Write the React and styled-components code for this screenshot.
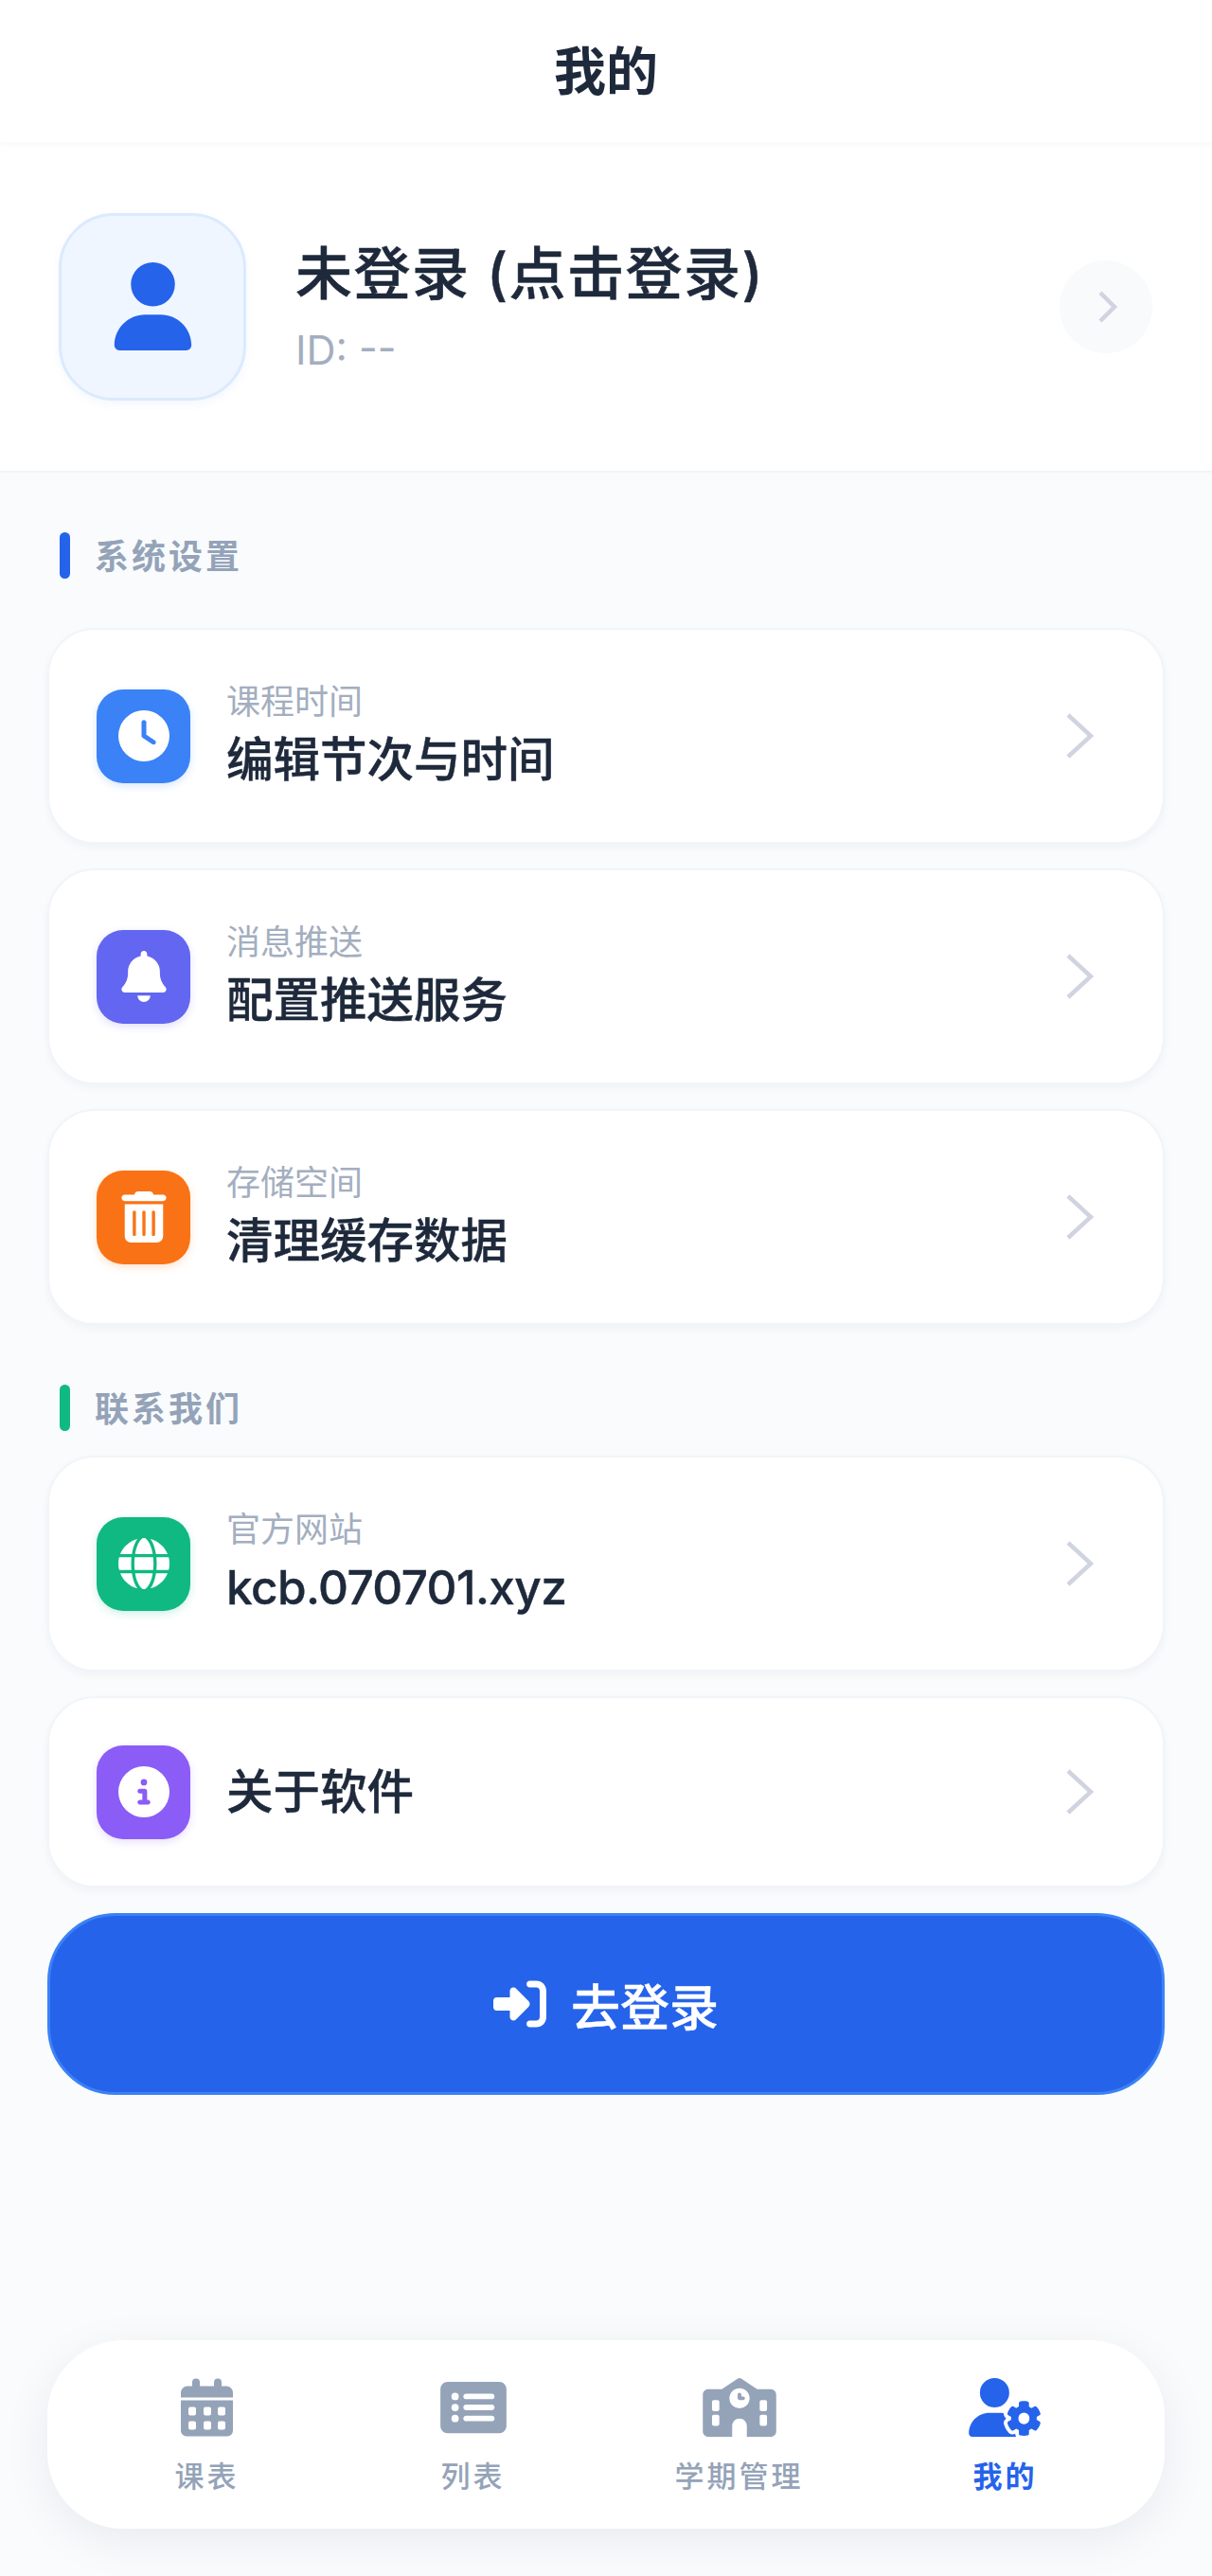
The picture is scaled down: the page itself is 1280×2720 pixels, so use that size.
import React from "react";
import styled, { createGlobalStyle } from "styled-components";
import {
    FaBell,
    FaCircleInfo,
    FaClock,
    FaGlobe,
    FaRectangleList,
    FaRightToBracket,
    FaSchool,
    FaTrashCan,
    FaUser,
    FaUserGear,
} from "react-icons/fa6";

const FONT = `Inter, "Noto Sans CJK SC", sans-serif`;

const GlobalStyle = createGlobalStyle`
    html, body {
        margin: 0;
        padding: 0;
        background: #f9fbfd;
    }

    * {
        box-sizing: border-box;
    }
`;

const Page = styled.div`
    display: flex;
    flex-direction: column;
    width: 1280px;
    height: 2720px;
    overflow: hidden;
    background: #f9fbfd;
    font-family: ${FONT};
    color: #1e293b;
`;

const Header = styled.header`
    display: flex;
    align-items: center;
    justify-content: center;
    height: 150px;
    padding-bottom: 8px;
    background: #ffffff;
    box-shadow: 0 2px 6px rgba(15, 23, 42, 0.03);
    font-size: 55px;
    font-weight: 600;
    position: relative;
`;

const Profile = styled.section`
    display: flex;
    align-items: center;
    height: 349px;
    padding: 0 63px 0 62px;
    background: #ffffff;
    border-bottom: 2px solid #f1f5f9;
`;

const Avatar = styled.div`
    display: flex;
    align-items: center;
    justify-content: center;
    flex: none;
    width: 198px;
    height: 198px;
    margin-right: 52px;
    border: 3px solid #dbeafe;
    border-radius: 58px;
    background: #eff6ff;
    color: #2563eb;
    font-size: 93px;
    box-shadow: 0 4px 10px rgba(37, 99, 235, 0.05);
`;

const ProfileText = styled.div`
    flex: 1;
    display: flex;
    flex-direction: column;
    gap: 18px;
`;

const ProfileName = styled.div`
    font-size: 60px;
    font-weight: 500;
    line-height: 72px;
    letter-spacing: 1.5px;
    -webkit-text-stroke: 0.5px #1e293b;
`;

const ProfileId = styled.div`
    font-size: 43px;
    line-height: 52px;
    color: #a3aebf;
`;

const RoundArrow = styled.div`
    display: flex;
    align-items: center;
    justify-content: center;
    width: 98px;
    height: 98px;
    padding-left: 3px;
    border-radius: 50%;
    background: #f8fafc;
`;

const Content = styled.main`
    display: flex;
    flex-direction: column;
    padding: 0 50px;
`;

const SectionTitle = styled.div`
    display: flex;
    align-items: center;
    gap: 26px;
    height: 49px;
    margin: ${(p) => p.$margin};
    padding-left: 13px;
    font-size: 36px;
    font-weight: 600;
    letter-spacing: 3px;
    color: #94a3b8;

    &::before {
        content: "";
        width: 11px;
        height: 49px;
        border-radius: 6px;
        background: ${(p) => p.$color};
    }
`;

const SectionText = styled.span`
    margin-top: -3px;
`;

const Cards = styled.div`
    display: flex;
    flex-direction: column;
    gap: 26px;
`;

const Card = styled.div`
    display: flex;
    align-items: center;
    height: ${(p) => (p.$short ? "202px" : "228px")};
    padding: 0 50px;
    border: 2px solid #f1f5f9;
    border-radius: 50px;
    background: #ffffff;
    box-shadow: 0 4px 10px rgba(15, 23, 42, 0.04);
`;

const IconTile = styled.div`
    display: flex;
    align-items: center;
    justify-content: center;
    flex: none;
    width: 99px;
    height: 99px;
    margin-right: 38px;
    border-radius: 28px;
    background: ${(p) => p.$color};
    color: #ffffff;
    font-size: 54px;
    box-shadow: 0 3px 8px ${(p) => p.$color}33;
`;

const CardText = styled.div`
    flex: 1;
    display: flex;
    flex-direction: column;
    gap: 4px;
    margin-top: ${(p) => (p.$single ? "0" : "-4px")};
`;

const CardLabel = styled.div`
    font-size: 36px;
    line-height: 50px;
    color: #a3aebf;
`;

const CardValue = styled.div`
    font-size: 49.5px;
    font-weight: 500;
    line-height: 64px;
    letter-spacing: ${(p) => (p.$latin ? "-0.6px" : "0")};
    color: #1e293b;
    -webkit-text-stroke: 0.4px #1e293b;
`;

const Chevron = styled.svg`
    flex: none;
    width: 30px;
    height: 50px;
    margin-right: 23px;
    fill: none;
    stroke: #cfd4e0;
    stroke-width: 4.5px;
`;

const LoginButton = styled.button`
    display: flex;
    align-items: center;
    justify-content: center;
    gap: 26px;
    width: 100%;
    height: 192px;
    margin-top: 27px;
    border: 3px solid #3b82f6;
    border-radius: 72px;
    background: #2563eb;
    color: #ffffff;
    font-family: ${FONT};
    font-size: 52px;
    font-weight: 500;
    -webkit-text-stroke: 0.4px #ffffff;

    svg {
        font-size: 56px;
    }
`;

const BottomNav = styled.nav`
    display: grid;
    grid-template-columns: repeat(4, 1fr);
    align-items: center;
    width: 1180px;
    height: 199px;
    margin: auto 50px 50px;
    padding: 0 28px;
    border-radius: 80px;
    background: #ffffff;
    box-shadow: 0 12px 50px rgba(15, 23, 42, 0.07);
`;

const NavItem = styled.div`
    display: flex;
    flex-direction: column;
    align-items: center;
    color: ${(p) => (p.$active ? "#2563eb" : "#94a3b8")};
`;

const NavIcon = styled.div`
    display: flex;
    align-items: center;
    justify-content: center;
    height: 62px;
    margin-top: 4px;

    svg {
        width: ${(p) => p.$width}px;
        height: 62px;
    }
`;

const NavLabel = styled.span`
    margin-top: 22px;
    font-size: 31px;
    font-weight: ${(p) => (p.$active ? 600 : 500)};
    line-height: 40px;
    letter-spacing: 3px;
`;

const Arrow = () => (
    <Chevron viewBox="0 0 30 50">
        <path d="M3 3 L27 25 L3 47" />
    </Chevron>
);

// calendar tab: two rings, a header band, and a body with 3x2 day cells cut out
const CalendarIcon = () => (
    <svg viewBox="0 0 55 61" fill="currentColor">
        <path d="M12 8V4a4 4 0 0 1 8 0v4h15V4a4 4 0 0 1 8 0v4h5a7 7 0 0 1 7 7v5H0v-5a7 7 0 0 1 7-7z" />
        <path
            fillRule="evenodd"
            d="M0 23h55v32a6 6 0 0 1-6 6H6a6 6 0 0 1-6-6z
               M10 30a2 2 0 0 0-2 2v5a2 2 0 0 0 2 2h4a2 2 0 0 0 2-2v-5a2 2 0 0 0-2-2z
               M26 30a2 2 0 0 0-2 2v5a2 2 0 0 0 2 2h4a2 2 0 0 0 2-2v-5a2 2 0 0 0-2-2z
               M41 30a2 2 0 0 0-2 2v5a2 2 0 0 0 2 2h4a2 2 0 0 0 2-2v-5a2 2 0 0 0-2-2z
               M10 45a2 2 0 0 0-2 2v5a2 2 0 0 0 2 2h4a2 2 0 0 0 2-2v-5a2 2 0 0 0-2-2z
               M26 45a2 2 0 0 0-2 2v5a2 2 0 0 0 2 2h4a2 2 0 0 0 2-2v-5a2 2 0 0 0-2-2z
               M41 45a2 2 0 0 0-2 2v5a2 2 0 0 0 2 2h4a2 2 0 0 0 2-2v-5a2 2 0 0 0-2-2z"
        />
    </svg>
);

const SettingCard = ({ icon, color, label, value, short, latin }) => (
    <Card $short={short}>
        <IconTile $color={color}>{icon}</IconTile>
        <CardText $single={!label}>
            {label && <CardLabel>{label}</CardLabel>}
            <CardValue $latin={latin}>{value}</CardValue>
        </CardText>
        <Arrow />
    </Card>
);

const tabs = [
    { label: "课表", icon: <CalendarIcon />, width: 55 },
    { label: "列表", icon: <FaRectangleList />, width: 70 },
    { label: "学期管理", icon: <FaSchool />, width: 78 },
    { label: "我的", icon: <FaUserGear />, width: 78, active: true },
];

const App = () => {
    return (
        <Page>
            <GlobalStyle />
            <Header>我的</Header>
            <Profile>
                <Avatar>
                    <FaUser />
                </Avatar>
                <ProfileText>
                    <ProfileName>未登录 (点击登录)</ProfileName>
                    <ProfileId>ID: --</ProfileId>
                </ProfileText>
                <RoundArrow>
                    <svg width="22" height="36" viewBox="0 0 22 36" fill="none" stroke="#cfd4e0" strokeWidth="4.5">
                        <path d="M3 3 L18 18 L3 33" />
                    </svg>
                </RoundArrow>
            </Profile>
            <Content>
                <SectionTitle $color="#2563eb" $margin="63px 0 52px">
                    <SectionText>系统设置</SectionText>
                </SectionTitle>
                <Cards>
                    <SettingCard
                        icon={<FaClock />}
                        color="#3b82f6"
                        label="课程时间"
                        value="编辑节次与时间"
                    />
                    <SettingCard
                        icon={<FaBell />}
                        color="#6366f1"
                        label="消息推送"
                        value="配置推送服务"
                    />
                    <SettingCard
                        icon={<FaTrashCan />}
                        color="#f97316"
                        label="存储空间"
                        value="清理缓存数据"
                    />
                </Cards>
                <SectionTitle $color="#10b981" $margin="63px 0 26px">
                    <SectionText>联系我们</SectionText>
                </SectionTitle>
                <Cards>
                    <SettingCard
                        icon={<FaGlobe />}
                        color="#10b981"
                        label="官方网站"
                        value="kcb.070701.xyz"
                        latin
                    />
                    <SettingCard
                        icon={<FaCircleInfo />}
                        color="#8b5cf6"
                        value="关于软件"
                        short
                    />
                </Cards>
                <LoginButton>
                    <FaRightToBracket />
                    去登录
                </LoginButton>
            </Content>
            <BottomNav>
                {tabs.map((tab) => (
                    <NavItem key={tab.label} $active={tab.active}>
                        <NavIcon $width={tab.width}>{tab.icon}</NavIcon>
                        <NavLabel $active={tab.active}>{tab.label}</NavLabel>
                    </NavItem>
                ))}
            </BottomNav>
        </Page>
    );
};

export default App;
